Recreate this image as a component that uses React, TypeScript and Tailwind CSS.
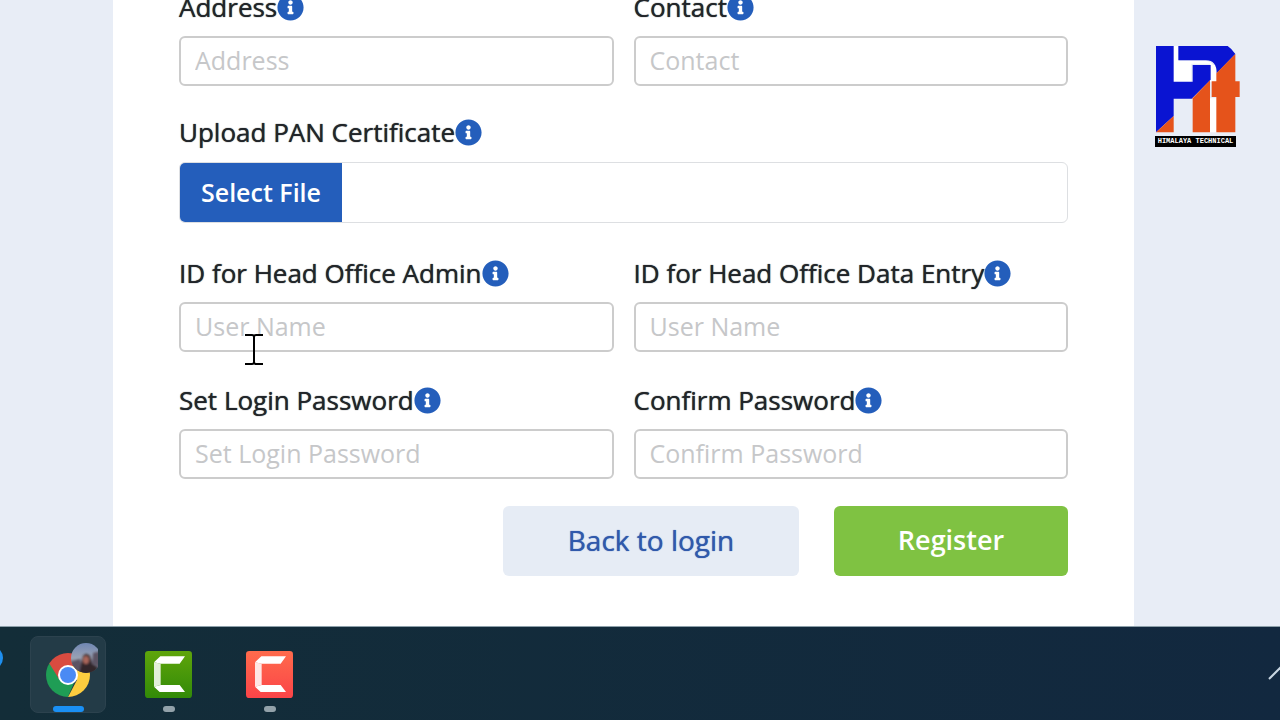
import { FaInfoCircle } from "react-icons/fa";

type FieldProps = {
  id: string;
  label: string;
  placeholder: string;
  type?: string;
};

function FieldLabel({ htmlFor, children }: { htmlFor: string; children: string }) {
  return (
    <div className="flex h-9 items-center">
      <label
        htmlFor={htmlFor}
        className="whitespace-nowrap text-[26px] text-[#212529] [text-shadow:0_0_1px_#212529]"
      >
        {children}
      </label>
      <FaInfoCircle className="size-[27px] shrink-0 text-[#245ebb]" />
    </div>
  );
}

function Field({ id, label, placeholder, type = "text" }: FieldProps) {
  return (
    <div className="flex min-w-0 flex-col gap-[11px]">
      <FieldLabel htmlFor={id}>{label}</FieldLabel>
      <input
        id={id}
        type={type}
        placeholder={placeholder}
        className="h-[50px] w-full rounded-md border-2 border-[#cccccc] bg-white px-[14px] pb-[2px] text-[25px] text-[#212529] placeholder:text-[#c6c7c9]"
      />
    </div>
  );
}

function ChannelLogo() {
  return (
    <div className="w-[85px]">
      <svg viewBox="45 30 255 264" className="h-[88px] w-[85px]">
        <path fill="#fff" d="M98 33H118V77H196Q214 79 219 90H232V140H208V292H234V190H210V86H154V143H98Z" />
        <path fill="#0a14d2" d="M48 33H101V140H158V90H212V134L155 191H101V243L48 292Z" />
        <path fill="#e5531b" d="M48 292L101 243V292Z" />
        <path fill="#e5531b" d="M210 136V292H158V190Z" />
        <path fill="#0a14d2" d="M115 33H263Q274 40 286 57L230 115Q230 76 198 76H115Z" />
        <path fill="#e5531b" d="M286 57V139H299V186H286V292H229V186H215V139H229V115Z" />
      </svg>
      <div className="mt-[3px] flex h-[11px] w-[81px] items-center justify-center bg-black font-['Liberation_Mono',monospace] text-[7px] font-bold leading-none text-white">
        HIMALAYA&nbsp;TECHNICAL
      </div>
    </div>
  );
}

function ChromeIcon() {
  return (
    <svg viewBox="0 0 60 60" className="size-[60px]">
      <defs>
        <clipPath id="disc">
          <circle cx="30" cy="38" r="22" />
        </clipPath>
        <clipPath id="avatar">
          <circle cx="48" cy="21" r="15" />
        </clipPath>
        <linearGradient id="sky" x1="0" y1="0" x2="0" y2="1">
          <stop offset="0" stopColor="#7087b4" />
          <stop offset="0.5" stopColor="#9aa2b3" />
          <stop offset="1" stopColor="#3d3a45" />
        </linearGradient>
        <filter id="soft">
          <feGaussianBlur stdDeviation="1" />
        </filter>
      </defs>
      <g clipPath="url(#disc)">
        <path fill="#1f9d55" d="M6 20L12 25L21 42L36 46L29 62H4Z" />
        <path fill="#fdcd3f" d="M30 28H56V62H29L39 43Z" />
        <path fill="#d94b40" d="M11 26L16 12H56V29H30L21 42Z" />
      </g>
      <circle cx="30" cy="38" r="10" fill="#fff" />
      <circle cx="30" cy="38" r="8" fill="#4a8af4" />
      <g clipPath="url(#avatar)">
        <rect x="33" y="6" width="30" height="30" fill="url(#sky)" />
        <g filter="url(#soft)">
          <path fill="#5c5363" d="M33 25L42 22L45 36H33ZM55 16L63 14V30L54 27Z" />
          <path fill="#33262c" d="M41 37L43 28L45 19Q48 15 52 19L54 27L59 30V37Z" />
          <ellipse cx="48" cy="23" rx="3" ry="4" fill="#a9665a" />
        </g>
      </g>
    </svg>
  );
}

function CamtasiaIcon({ id, from, to }: { id: string; from: string; to: string }) {
  return (
    <svg viewBox="0 0 141 141" className="size-[47px]">
      <defs>
        <linearGradient id={id} x1="0" y1="0" x2="0" y2="1">
          <stop offset="0" stopColor={from} />
          <stop offset="1" stopColor={to} />
        </linearGradient>
      </defs>
      <rect width="141" height="141" rx="10" fill={`url(#${id})`} />
      <path fill="#fff" fillOpacity="0.85" d="M27 34L47 38V102L27 107Z" />
      <path fill="#fff" d="M27 34L46 16H120L104 38H47ZM27 107L47 102H104L120 123H44Z" />
    </svg>
  );
}

function Taskbar() {
  return (
    <footer className="flex h-[94px] shrink-0 items-start border-t border-[#8da0aa] bg-linear-to-r from-[#132d38] to-[#12283f] pt-[9px]">
      <svg viewBox="0 0 4 44" className="h-11 w-1">
        <circle cx="-9" cy="22" r="12" fill="#1e8ff0" />
      </svg>
      <nav className="ml-[26px] flex gap-6">
        <button
          type="button"
          aria-label="Google Chrome"
          className="flex h-[77px] w-[76px] flex-col items-center justify-between rounded-lg border border-[#2c424e] bg-[#233b47]"
        >
          <ChromeIcon />
          <span className="h-[6px] w-[31px] rounded-full bg-[#1a90f5]" />
        </button>
        <button
          type="button"
          aria-label="Camtasia"
          className="flex h-[77px] w-[77px] flex-col items-center justify-between pt-[15px] pb-px"
        >
          <CamtasiaIcon id="green" from="#5fa50b" to="#328a08" />
          <span className="h-[6px] w-3 rounded-full bg-[#93a2aa]" />
        </button>
        <button
          type="button"
          aria-label="Camtasia Recorder"
          className="flex h-[77px] w-[77px] flex-col items-center justify-between pt-[15px] pb-px"
        >
          <CamtasiaIcon id="red" from="#ff6b4c" to="#fb4448" />
          <span className="h-[6px] w-3 rounded-full bg-[#93a2aa]" />
        </button>
      </nav>
      <svg viewBox="0 0 12 14" className="ml-auto mt-[30px] h-[14px] w-3">
        <path d="M1 13L13 1" stroke="#c9d6e2" strokeWidth="2" fill="none" />
      </svg>
    </footer>
  );
}

export default function App() {
  return (
    <div className="relative flex min-h-screen flex-col overflow-hidden bg-[#e8edf6] font-['Open_Sans',sans-serif]">
      <div className="flex flex-1">
        <main className="ml-[113px] flex-1 bg-white px-[66px] pb-[50px]">
          <form className="-mt-[11px]" onSubmit={(e) => e.preventDefault()}>
            <div className="grid grid-cols-2 gap-5">
              <Field id="address" label="Address" placeholder="Address" />
              <Field id="contact" label="Contact" placeholder="Contact" />
            </div>
            <div className="mt-7 flex flex-col gap-3">
              <FieldLabel htmlFor="pan">Upload PAN Certificate</FieldLabel>
              <div className="flex h-[61px] overflow-hidden rounded-md border border-[#dddfe2]">
                <button
                  id="pan"
                  type="button"
                  className="w-[162px] bg-[#245ebb] text-[25px] font-semibold text-white"
                >
                  Select File
                </button>
              </div>
            </div>
            <div className="mt-8 grid grid-cols-2 gap-x-5 gap-y-[30px]">
              <Field id="admin" label="ID for Head Office Admin" placeholder="User Name" />
              <Field id="entry" label="ID for Head Office Data Entry" placeholder="User Name" />
              <Field
                id="password"
                label="Set Login Password"
                placeholder="Set Login Password"
                type="password"
              />
              <Field
                id="confirm"
                label="Confirm Password"
                placeholder="Confirm Password"
                type="password"
              />
            </div>
            <div className="mt-[27px] flex justify-end gap-[35px]">
              <button
                type="button"
                className="h-[70px] w-[296px] rounded-md bg-[#e6ecf5] pb-[2px] text-[28px] text-[#3059ab] [text-shadow:0_0_1px_#3059ab]"
              >
                Back to login
              </button>
              <button
                type="submit"
                className="h-[70px] w-[234px] rounded-md bg-[#7fc242] pb-[2px] text-[27px] font-semibold text-white"
              >
                Register
              </button>
            </div>
          </form>
        </main>
        <aside className="w-[146px] pl-[21px] pt-[45px]">
          <ChannelLogo />
        </aside>
      </div>
      <Taskbar />
      {/* text cursor hovering over the form */}
      <svg viewBox="0 0 18 32" className="pointer-events-none absolute left-[245px] top-[333px] h-8 w-[18px]">
        <path d="M0 2H7Q9 2 9 4Q9 2 11 2H18M9 3V30M0 31H7Q9 31 9 29Q9 31 11 31H18" fill="none" stroke="#000" strokeWidth="2" />
      </svg>
    </div>
  );
}
